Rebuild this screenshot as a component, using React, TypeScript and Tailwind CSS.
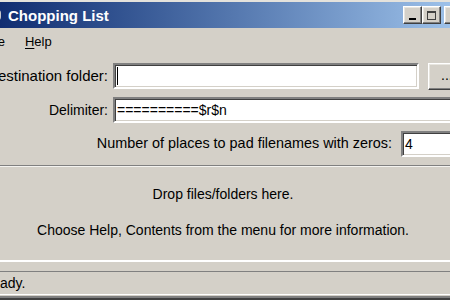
import React from "react";

const sunken =
  "border-2 border-t-[#808080] border-l-[#808080] border-b-white border-r-white shadow-[inset_1px_1px_0_#404040,inset_-1px_-1px_0_#d4d0c8] bg-white";
const raised =
  "border border-t-white border-l-white border-b-[#404040] border-r-[#404040] shadow-[inset_-1px_-1px_0_#808080,inset_1px_1px_0_#e8e6e0] bg-[#d4d0c8]";

function CaptionButton({ children }: { children: React.ReactNode }) {
  return (
    <div className={`flex h-[18px] w-[19px] items-center justify-center ${raised}`}>{children}</div>
  );
}

export default function App() {
  return (
    <div
      className="h-[300px] w-[450px] overflow-hidden bg-[#d4d0c8] text-black"
      style={{ fontFamily: '"Liberation Sans", Arial, sans-serif' }}
    >
      <div className="-ml-[26px] flex h-full w-[502px] flex-col">
        {/* title bar */}
        <div className="h-[2px] bg-[#e4e2dc]" />
        <div className="flex h-[26px] items-center bg-linear-to-r from-[#0a246a] to-[#a6caf0] pl-[10px] pr-[13px]">
          <div className="flex h-[18px] w-[18px] items-center justify-center">
            <div className="h-[12px] w-[16px] rounded-sm border border-[#c8c8c8] bg-[#f0f0f0]" />
          </div>
          <span className="ml-[6px] text-[15px] font-bold leading-none text-white">Chopping List</span>
          <div className="ml-auto flex items-center">
            <CaptionButton>
              <div className="mt-[8px] h-[2px] w-[7px] bg-black" />
            </CaptionButton>
            <CaptionButton>
              <div className="h-[9px] w-[9px] border border-t-2 border-[#404040]" />
            </CaptionButton>
            <div className="ml-[3px]">
              <CaptionButton>
                <span className="text-[13px] font-bold leading-none">×</span>
              </CaptionButton>
            </div>
          </div>
        </div>

        {/* menu bar */}
        <div className="flex h-[27px] items-center text-[13px]">
          <span className="px-[10px]">
            <span className="underline underline-offset-2">F</span>ile
          </span>
          <span className="px-[10px]">
            <span className="underline underline-offset-2">H</span>elp
          </span>
        </div>

        {/* form */}
        <div className="flex flex-col gap-[8px] py-[8px] pr-[18px] text-[14px]">
          <div className="flex h-[26px] items-center">
            <div className="flex w-[134px] shrink-0 justify-end whitespace-nowrap text-[15px]">Destination folder:</div>
            <div className={`ml-[5px] flex h-[26px] flex-1 items-center ${sunken}`}>
              <span className="ml-[2px] h-[18px] w-[1px] bg-black" />
            </div>
            <div className={`ml-[9px] h-[27px] w-[30px] pl-[12px] leading-[22px] ${raised}`}>...</div>
          </div>
          <div className="flex h-[26px] items-center">
            <div className="flex w-[134px] shrink-0 justify-end whitespace-nowrap">Delimiter:</div>
            <div className={`ml-[5px] flex h-[26px] flex-1 items-center pl-[2px] ${sunken}`}>==========$r$n</div>
          </div>
          <div className="flex h-[26px] items-center">
            <div className="flex flex-1 justify-end whitespace-nowrap text-[14.4px]">
              Number of places to pad filenames with zeros:
            </div>
            <div className={`ml-[9px] flex h-[26px] w-[57px] items-center pl-[2px] ${sunken}`}>4</div>
          </div>
        </div>

        {/* drop zone */}
        <div className="flex h-[97px] flex-col items-center border-t border-b-2 border-t-[#808080] border-b-white pr-[4px] pt-[20px] text-[14px] leading-[16px] shadow-[inset_0_1px_0_#f4f3f0]">
          <div>Drop files/folders here.</div>
          <div className="mt-[20px]">Choose Help, Contents from the menu for more information.</div>
        </div>

        {/* status bar */}
        <div className="mt-[9px] flex h-[24px] items-center border-t border-b border-t-[#808080] border-b-white pl-[8px] text-[14px]">
          Ready.
        </div>
        <div className="h-[1px] bg-[#d4d0c8]" />
        <div className="h-[2px] bg-[#808080]" />
        <div className="flex-1 bg-[#404040]" />
      </div>
    </div>
  );
}
